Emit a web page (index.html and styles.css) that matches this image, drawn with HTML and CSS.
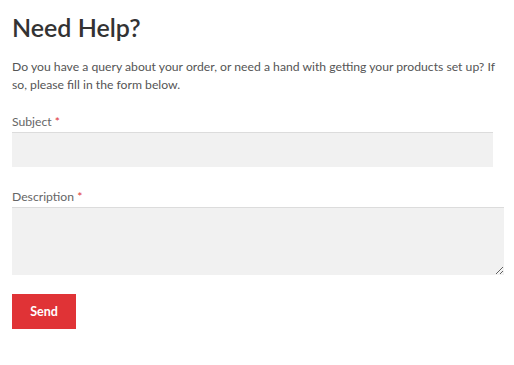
FILE: index.html
```html
<!DOCTYPE html>
<html lang="en">
<head>
    <meta charset="UTF-8">
    <meta name="viewport" content="width=device-width, initial-scale=1.0">
    <title>Need Help?</title>
    <link rel="stylesheet" href="styles.css">
</head>
<body>
    <div class="help">
        <h1>Need Help?</h1>
        <p class="intro">Do you have a query about your order, or need a hand with getting your products set up? If so, please fill in the form below.</p>

        <form class="help-form">
            <label for="subject">Subject <span class="req">*</span></label>
            <input type="text" id="subject" name="subject" class="subject" required>

            <label for="description">Description <span class="req">*</span></label>
            <textarea id="description" name="description" required></textarea>

            <button type="submit">Send</button>
        </form>
    </div>
</body>
</html>
```

FILE: styles.css
```css
body, html {
    margin: 0;
    padding: 0;
    background-color: #ffffff;
    font-family: Lato, "Open Sans", sans-serif;
}

.help {
    padding: 10px 10px 0 12px;
}

h1 {
    margin: 0;
    font-size: 25px;
    font-weight: 600;
    color: #333;
    line-height: 34px;
}

.intro {
    margin: 14px 0 19px;
    font-size: 12.2px;
    line-height: 18px;
    color: #555;
}

.help-form {
    display: flex;
    flex-direction: column;
    align-items: flex-start;
}

label {
    font-size: 12.2px;
    line-height: 18px;
    color: #666;
    margin-bottom: 1px;
}

.req {
    color: #e03336;
}

input, textarea {
    box-sizing: border-box;
    border: none;
    border-top: 1px solid #dcdcdc;
    background-color: #f1f1f1;
    outline: none;
    font-family: inherit;
    font-size: 13px;
}

.subject {
    width: 481px;
    height: 35px;
    margin-bottom: 21px;
}

textarea {
    width: 492px;
    height: 68px;
    margin: 0 0 19px;
    resize: vertical;
}

button {
    width: 64px;
    height: 35px;
    border: none;
    background-color: #e03336;
    color: #fff;
    font-family: inherit;
    font-size: 12.5px;
    font-weight: 700;
    cursor: pointer;
}
```
